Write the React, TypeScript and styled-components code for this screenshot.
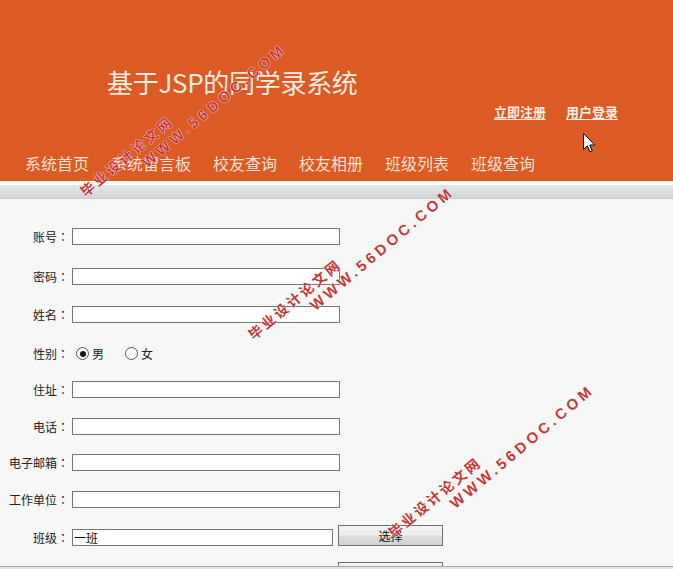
import React from "react";
import styled, { createGlobalStyle } from "styled-components";

const Global = createGlobalStyle`
  html, body { margin: 0; padding: 0; }
  body {
    background: #f7f7f7;
    font-family: "Noto Sans CJK SC", "Liberation Sans", sans-serif;
    overflow: hidden;
  }
`;

const Page = styled.div`
  position: relative;
  width: 673px;
  min-height: 569px;
  overflow: hidden;
`;

const Header = styled.header`
  position: relative;
  height: 181px;
  background: #dc5a23;
  display: flex;
  flex-direction: column;
`;

const Title = styled.h1`
  margin: 67px 0 0 107px;
  font-size: 26px;
  line-height: 30px;
  font-weight: 400;
  letter-spacing: -0.3px;
  color: #f9ece0;
`;

const UserLinks = styled.div`
  display: flex;
  justify-content: flex-end;
  gap: 20px;
  padding-right: 55px;
  margin-top: 7px;
`;

const UserLink = styled.a`
  font-size: 13px;
  line-height: 16px;
  font-weight: 700;
  color: #fbf0e6;
  text-decoration: underline;
  text-underline-offset: 2px;
`;

const Nav = styled.nav`
  display: flex;
  gap: 22px;
  padding-left: 25px;
  margin-top: 33px;
`;

const NavItem = styled.a`
  font-size: 16px;
  line-height: 20px;
  color: #f6e2d2;
  text-decoration: none;
  white-space: nowrap;
`;

const Cursor = styled.svg`
  position: absolute;
  left: 583px;
  top: 133px;
`;

const Band = styled.div`
  height: 13px;
  border-top: 4px solid #ffffff;
  border-bottom: 1px solid #c9cccd;
  background: linear-gradient(#e4e7e9, #d2d6d8);
`;

const Form = styled.form`
  display: flex;
  flex-direction: column;
  margin: 0;
`;

const Row = styled.div<{ $mt: number }>`
  display: flex;
  align-items: center;
  height: 17px;
  margin-top: ${(p) => p.$mt}px;
`;

const Label = styled.label`
  width: 69px;
  margin-right: 3px;
  text-align: right;
  font-size: 12px;
  line-height: 17px;
  color: #222;
  white-space: nowrap;
`;

const Colon = styled.span`
  display: inline-block;
  width: 12px;
  text-align: center;
  font-family: "Noto Sans CJK TC", "Noto Sans CJK SC", sans-serif;
`;

const TextInput = styled.input<{ $w: number }>`
  box-sizing: border-box;
  width: ${(p) => p.$w}px;
  height: 17px;
  margin: 0;
  border: 1px solid #767676;
  background: #fff;
  padding: 0 1px;
  font: 12px/15px "Noto Sans CJK SC", "Liberation Sans", sans-serif;
  color: #111;
  outline: none;
`;

const RadioDot = styled.span<{ $checked?: boolean; $ml: number }>`
  box-sizing: border-box;
  width: 13px;
  height: 13px;
  margin-left: ${(p) => p.$ml}px;
  border: 1px solid #555;
  border-radius: 50%;
  background: #fff;
  display: flex;
  align-items: center;
  justify-content: center;
  &::after {
    content: "";
    width: 6px;
    height: 6px;
    border-radius: 50%;
    background: ${(p) => (p.$checked ? "#111" : "transparent")};
  }
`;

const RadioText = styled.span`
  margin-left: 3px;
  font-size: 12px;
  line-height: 17px;
  color: #222;
`;

const SideButton = styled.button`
  align-self: flex-end;
  box-sizing: border-box;
  width: 105px;
  height: 21px;
  margin: 0 0 0 5px;
  padding: 0;
  border: 1px solid #707070;
  border-radius: 0;
  background: linear-gradient(#f4f4f4 0%, #ececec 48%, #dedede 52%, #d3d3d3 100%);
  font: 12px/19px "Noto Sans CJK SC", "Liberation Sans", sans-serif;
  color: #111;
`;

const WindowEdge = styled.div`
  position: fixed;
  left: 0;
  right: 0;
  bottom: 0;
  height: 2px;
  border-top: 1px solid #a8a8a8;
  background: #e4e4e4;
  z-index: 4;
`;

const Watermark = styled.div<{ $x: number; $y: number }>`
  position: absolute;
  left: ${(p) => p.$x}px;
  top: ${(p) => p.$y - 12}px;
  transform-origin: 0 12px;
  transform: rotate(-40deg);
  color: #c2383a;
  white-space: nowrap;
  pointer-events: none;
  text-shadow: 0 0 1px #fff, 0 0 1px #fff;
  z-index: 5;
`;

const WmCn = styled.div`
  font: 700 14px/14px "Noto Sans CJK SC", sans-serif;
  letter-spacing: 2.6px;
`;

const WmEn = styled.div`
  font: 700 15px/15px "Liberation Sans", sans-serif;
  letter-spacing: 3.7px;
  margin: 3px 0 0 66px;
`;

type Field = { label: string; mt: number; w?: number; value?: string; button?: string };

const fields: Field[] = [
  { label: "账号", mt: 29 },
  { label: "密码", mt: 23 },
  { label: "姓名", mt: 21 },
];

const fields2: Field[] = [
  { label: "住址", mt: 19 },
  { label: "电话", mt: 20 },
  { label: "电子邮箱", mt: 19 },
  { label: "工作单位", mt: 20 },
  { label: "班级", mt: 21, w: 261, value: "一班", button: "选择" },
  { label: "照片", mt: 20, w: 261, button: "上传" },
];

const navItems = ["系统首页", "系统留言板", "校友查询", "校友相册", "班级列表", "班级查询"];

const marks: [number, number][] = [
  [85, 197],
  [253, 340],
  [393, 538],
];

function FieldLabel({ text }: { text: string }) {
  return (
    <Label>
      {text}
      <Colon>：</Colon>
    </Label>
  );
}

function FieldRow({ f }: { f: Field }) {
  return (
    <Row $mt={f.mt}>
      <FieldLabel text={f.label} />
      <TextInput $w={f.w ?? 268} defaultValue={f.value ?? ""} />
      {f.button && <SideButton type="button">{f.button}</SideButton>}
    </Row>
  );
}

export default function App() {
  return (
    <Page>
      <Global />
      <Header>
        <Title>基于JSP的同学录系统</Title>
        <UserLinks>
          <UserLink>立即注册</UserLink>
          <UserLink>用户登录</UserLink>
        </UserLinks>
        <Nav>
          {navItems.map((n) => (
            <NavItem key={n}>{n}</NavItem>
          ))}
        </Nav>
        <Cursor width="13" height="21" viewBox="0 0 13 21">
          <path
            d="M0.5 0.5 L0.5 16.5 L4.3 12.8 L6.8 18.8 L9.2 17.8 L6.8 12 L11.8 12 Z"
            fill="#fff"
            stroke="#000"
            strokeWidth="1"
            strokeLinejoin="round"
          />
        </Cursor>
      </Header>
      <Band />
      <Form>
        {fields.map((f) => (
          <FieldRow key={f.label} f={f} />
        ))}
        <Row $mt={22}>
          <FieldLabel text="性别" />
          <RadioDot $checked $ml={4} />
          <RadioText>男</RadioText>
          <RadioDot $ml={21} />
          <RadioText>女</RadioText>
        </Row>
        {fields2.map((f) => (
          <FieldRow key={f.label} f={f} />
        ))}
      </Form>
      {marks.map(([x, y]) => (
        <Watermark key={x} $x={x} $y={y}>
          <WmCn>毕业设计论文网</WmCn>
          <WmEn>WWW.56DOC.COM</WmEn>
        </Watermark>
      ))}
      <WindowEdge />
    </Page>
  );
}
